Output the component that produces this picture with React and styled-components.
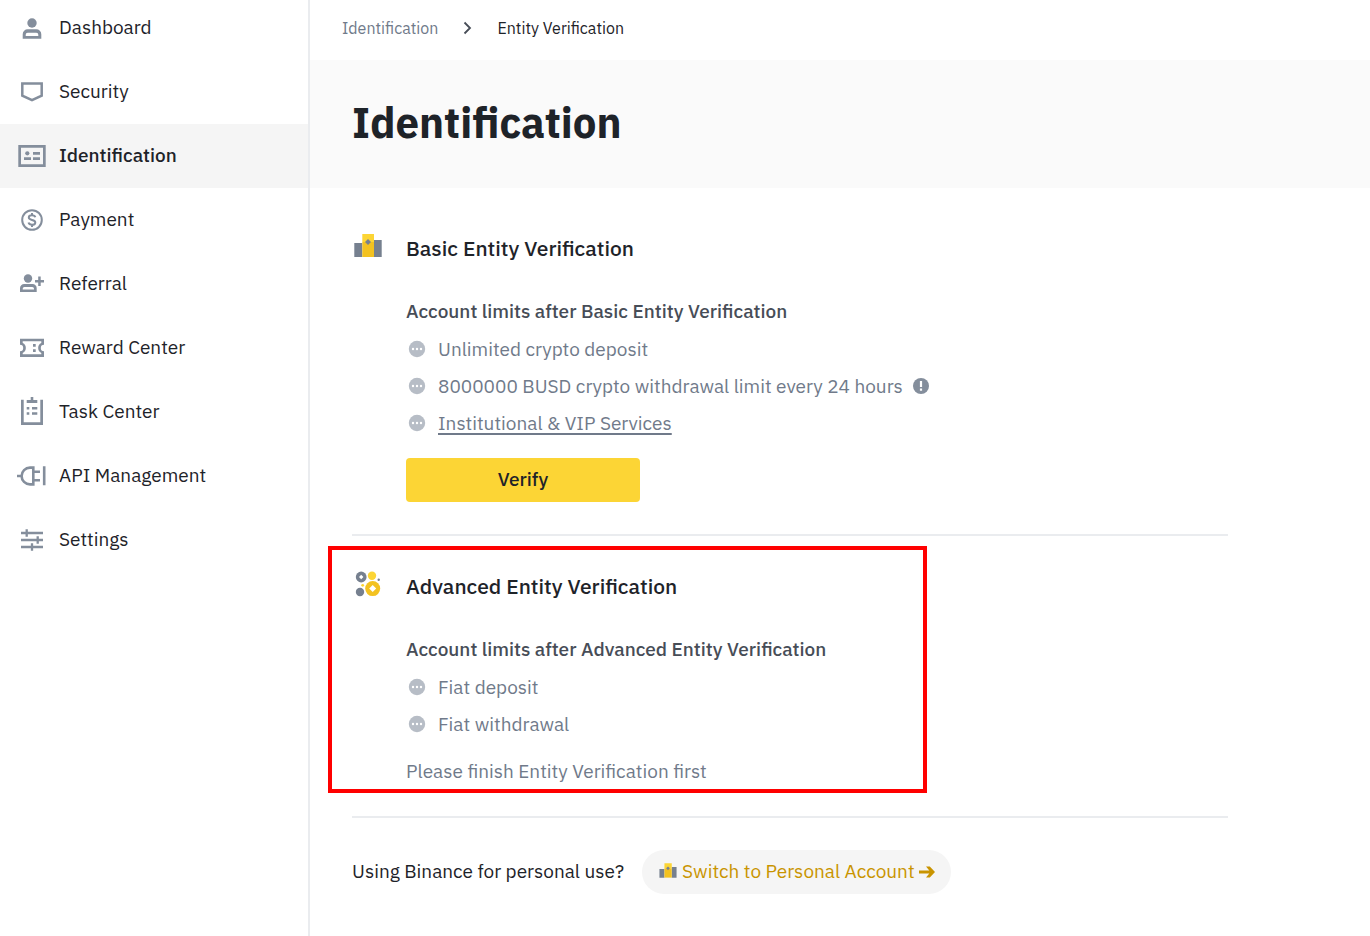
import React from "react";
import styled, { createGlobalStyle } from "styled-components";

const GlobalStyle = createGlobalStyle`
  *, *::before, *::after { box-sizing: border-box; }
  body {
    margin: 0;
    background: #fff;
    color: #1e2329;
    font-family: "IBM Plex Sans", Roboto, "Liberation Sans", sans-serif;
    font-size: 19px;
    line-height: 24px;
  }
  h1, h2, h3, p, ul, ol { margin: 0; padding: 0; }
  ul, ol { list-style: none; }
  a { color: inherit; text-decoration: none; }
`;

const Page = styled.div`
  display: flex;
  min-height: 100vh;
  overflow: hidden;
`;

const Sidebar = styled.nav`
  flex: 0 0 310px;
  border-right: 2px solid #eaecef;
`;

const NavList = styled.ul`
  margin-top: -4px;
`;

const NavLink = styled.a`
  display: flex;
  align-items: center;
  gap: 11px;
  height: 64px;
  padding: 0 16px;
  background: ${(p) => (p.$active ? "#f5f5f5" : "transparent")};
  font-weight: ${(p) => (p.$active ? 500 : 400)};
`;

const Label = styled.span`
  padding-bottom: 2px;
`;

const Icon = styled.svg`
  flex: none;
  display: block;
  width: ${(p) => p.$size || 32}px;
  height: ${(p) => p.$size || 32}px;
  color: #848e9c;
`;

const Main = styled.main`
  flex: 1;
  min-width: 0;
`;

const Crumbs = styled.ol`
  display: flex;
  align-items: center;
  height: 60px;
  padding: 0 32px 4px;
  font-size: 16px;
  color: #707a8a;
`;

const Crumb = styled.li`
  display: flex;
  align-items: center;
  color: ${(p) => (p.$current ? "#1e2329" : "inherit")};
`;

const Chevron = styled.svg`
  width: 11px;
  height: 14px;
  margin: 0 24px;
`;

const Banner = styled.header`
  display: flex;
  align-items: center;
  height: 128px;
  padding: 0 42px 2px;
  background: #fafafa;
`;

const PageTitle = styled.h1`
  font-size: 42px;
  line-height: 56px;
  font-weight: 700;
`;

const Content = styled.div`
  max-width: 960px;
  padding: 10px 42px 42px;
`;

const Section = styled.section`
  position: relative;
  padding: 34px 0 32px;
  border-bottom: 2px solid #eaecef;
`;

const SectionHead = styled.div`
  display: flex;
  align-items: center;
  gap: 22px;
  margin-bottom: 29px;
`;

const SectionTitle = styled.h2`
  font-size: 21px;
  line-height: 32px;
  font-weight: 500;
`;

const SectionBody = styled.div`
  padding-left: 54px;
  color: #707a8a;
`;

const LimitsTitle = styled.h3`
  font-size: 19px;
  line-height: 37px;
  font-weight: 500;
  color: #474d57;
`;

const Limit = styled.li`
  display: flex;
  align-items: center;
  gap: 10px;
  height: 37px;
`;

const TextLink = styled.a`
  text-decoration: underline;
  text-decoration-thickness: 2px;
  text-underline-offset: 3px;
`;

const Note = styled.p`
  padding: 17px 0 1px;
`;

const VerifyButton = styled.button`
  display: block;
  width: 234px;
  height: 44px;
  margin-top: 17px;
  padding: 0 0 2px;
  border: 0;
  border-radius: 4px;
  background: #fcd535;
  color: #1e2329;
  font: inherit;
  font-weight: 500;
`;

const Highlight = styled.div`
  position: absolute;
  top: 10px;
  bottom: 23px;
  left: -24px;
  width: 599px;
  border: 4px solid #ff0000;
  pointer-events: none;
`;

const Switcher = styled.div`
  display: flex;
  align-items: center;
  gap: 18px;
  padding-top: 32px;
`;

const SwitchLink = styled.a`
  display: flex;
  align-items: center;
  gap: 4px;
  height: 44px;
  padding: 0 16px;
  border-radius: 22px;
  background: #f5f5f5;
  color: #c99400;
`;

const drawings = {
  user: (
    <g fill="currentColor">
      <circle cx="16" cy="11" r="4.7" />
      <path fillRule="evenodd" d="M6.7 26.7V22.3a5 5 0 0 1 5-5h8.6a5 5 0 0 1 5 5v4.4zM9.7 24h12.6v-1.3a2 2 0 0 0-2-2h-8.6a2 2 0 0 0-2 2z" />
    </g>
  ),
  shield: <path d="M6.3 7.6h19.4v12L16 24.2l-9.7-4.6z" fill="none" stroke="currentColor" strokeWidth="2.5" />,
  card: (
    <g fill="currentColor">
      <path fillRule="evenodd" d="M2.3 5h27.4v22H2.3zM5 7.7v16.6h22V7.7z" />
      <circle cx="11.3" cy="13.3" r="2.1" />
      <path d="M8 17.3h7V20H8zM17 12h7v2.7h-7zM17 17.3h7V20h-7z" />
    </g>
  ),
  dollar: (
    <g fill="none" stroke="currentColor" strokeWidth="2">
      <circle cx="16" cy="16" r="9.8" />
      <path d="M19.3 13.2c-.4-1.3-1.7-1.900-3.300-1.900-1.900 0-3.200.9-3.200 2.300 0 3.300 6.500 1.500 6.500 4.800 0 1.500-1.400 2.400-3.300 2.400-1.800 0-3.100-.8-3.500-2.200M16 9v2.500M16 20.500V23" />
    </g>
  ),
  referral: (
    <g fill="currentColor">
      <circle cx="12" cy="10.5" r="4.2" />
      <path fillRule="evenodd" d="M4 24v-3.800a4.200 4.200 0 0 1 4.200-4.200h8.300a4.200 4.200 0 0 1 4.200 4.200V24zM6.700 21.500H18v-.8a1.800 1.800 0 0 0-1.800-1.800H8.500a1.800 1.800 0 0 0-1.800 1.800z" />
      <path d="M22.200 8.500h2.500V12H28v2.500h-3.300V18h-2.500v-3.500H19V12h3.200z" />
    </g>
  ),
  ticket: (
    <g fill="currentColor">
      <path fillRule="evenodd" d="M4 6.700h24v6.100a3.200 3.200 0 0 0 0 6.400V25H4v-5.800a3.200 3.200 0 0 0 0-6.400zM6.700 9.300v1.800a5.400 5.400 0 0 1 0 9.800v1.400h18.600v-1.400a5.400 5.400 0 0 1 0-9.800V9.300z" />
      <path d="M17 12h2.700v2.700H17zM17 17.300h2.700V20H17z" />
    </g>
  ),
  clipboard: (
    <g fill="currentColor">
      <path d="M5 3.700h2.700v22.600h16.600V3.700H27V29H5z" />
      <path d="M10.700 4h4V1h2.600v3h4v3H10.700zM10.700 11h2.600v2.500h-2.600zM16 11h5.300v2.500H16zM10.700 16.300h2.600v2.500h-2.600zM16 16.300h5.300v2.500H16z" />
    </g>
  ),
  plug: (
    <g fill="none" stroke="currentColor" strokeWidth="2.6">
      <path d="M1 16h4M17.300 7.600H14a8.400 8.400 0 0 0 0 16.800h3.300zM18 11.700h6M18 20.300h6M28.200 6.300v19" />
    </g>
  ),
  sliders: (
    <g fill="none" stroke="currentColor" strokeWidth="2.3">
      <path d="M5 9h22M5 16h22M5 23h22M10.700 5.300v7.400M21.700 12.300v7.400M16 19.300v7.400" />
    </g>
  ),
  building: (
    <g>
      <path d="M2.300 11h8v14h-8zM22 8h7.700v17H22z" fill="#76808f" />
      <path d="M10.300 2H22v8H10.300z" fill="#fcd535" />
      <path d="M10.300 10H22v15H10.300z" fill="#f3c220" />
      <path d="M16 7l3 3-3 3-3-3z" fill="#76808f" />
    </g>
  ),
  coins: (
    <g>
      <g fill="#76808f">
        <circle cx="9.2" cy="7" r="5.4" />
        <circle cx="8" cy="22" r="4.2" />
        <circle cx="26.7" cy="9.7" r="1.2" />
      </g>
      <path d="M9.200 4.800L11.400 7 9.200 9.200 7 7z" fill="#fff" />
      <circle cx="20" cy="5.8" r="4.2" fill="#fcd535" />
      <circle cx="10.7" cy="15.3" r="1.4" fill="#fcd535" />
      <circle cx="20.7" cy="18.6" r="7.5" fill="#f3c220" />
      <path d="M20.700 15.100l3.500 3.500-3.500 3.500-3.500-3.500z" fill="#fff" />
    </g>
  ),
};

const Glyph = ({ name, size }) => (
  <Icon $size={size} viewBox="0 0 32 32" aria-hidden="true">
    {drawings[name]}
  </Icon>
);

const PendingDot = () => (
  <Icon $size={22} viewBox="0 0 22 22" aria-hidden="true">
    <circle cx="11" cy="11" r="8.2" fill="#b7bdc6" />
    <g fill="#fff">
      <circle cx="7" cy="11" r="1.2" />
      <circle cx="11" cy="11" r="1.2" />
      <circle cx="15" cy="11" r="1.2" />
    </g>
  </Icon>
);

const InfoDot = () => (
  <Icon $size={16} viewBox="0 0 16 16" role="img" aria-label="More information">
    <circle cx="8" cy="8" r="8" fill="#848e9c" />
    <path d="M6.900 3h2.200v6H6.900zM6.900 10.500h2.200v2.200H6.900z" fill="#fff" />
  </Icon>
);

const Arrow = () => (
  <Icon $size={16} viewBox="0 0 16 16" aria-hidden="true">
    <path d="M0 6.600h10.300L7 2.400h3.800L16 8l-5.200 5.600H7l3.300-4.200H0z" fill="#c99400" />
  </Icon>
);

const navItems = [
  ["user", "Dashboard"],
  ["shield", "Security"],
  ["card", "Identification"],
  ["dollar", "Payment"],
  ["referral", "Referral"],
  ["ticket", "Reward Center"],
  ["clipboard", "Task Center"],
  ["plug", "API Management"],
  ["sliders", "Settings"],
];

export default function App() {
  return (
    <>
      <GlobalStyle />
      <Page>
        <Sidebar aria-label="Account">
          <NavList>
            {navItems.map(([icon, label]) => (
              <li key={label}>
                <NavLink href="#" $active={label === "Identification"}>
                  <Glyph name={icon} />
                  <Label>{label}</Label>
                </NavLink>
              </li>
            ))}
          </NavList>
        </Sidebar>
        <Main>
          <nav aria-label="Breadcrumb">
            <Crumbs>
              <Crumb>
                <a href="#">Identification</a>
                <Chevron viewBox="0 0 11 14" aria-hidden="true">
                  <path d="M2.500 1.500L8 7l-5.500 5.500" fill="none" stroke="#474d57" strokeWidth="1.8" />
                </Chevron>
              </Crumb>
              <Crumb $current aria-current="page">Entity Verification</Crumb>
            </Crumbs>
          </nav>
          <Banner>
            <PageTitle>Identification</PageTitle>
          </Banner>
          <Content>
            <Section>
              <SectionHead>
                <Glyph name="building" />
                <SectionTitle>Basic Entity Verification</SectionTitle>
              </SectionHead>
              <SectionBody>
                <LimitsTitle>Account limits after Basic Entity Verification</LimitsTitle>
                <ul>
                  <Limit><PendingDot />Unlimited crypto deposit</Limit>
                  <Limit><PendingDot />8000000 BUSD crypto withdrawal limit every 24 hours<InfoDot /></Limit>
                  <Limit><PendingDot /><TextLink href="#">Institutional &amp; VIP Services</TextLink></Limit>
                </ul>
                <VerifyButton type="button">Verify</VerifyButton>
              </SectionBody>
            </Section>
            <Section>
              <SectionHead>
                <Glyph name="coins" />
                <SectionTitle>Advanced Entity Verification</SectionTitle>
              </SectionHead>
              <SectionBody>
                <LimitsTitle>Account limits after Advanced Entity Verification</LimitsTitle>
                <ul>
                  <Limit><PendingDot />Fiat deposit</Limit>
                  <Limit><PendingDot />Fiat withdrawal</Limit>
                </ul>
                <Note>Please finish Entity Verification first</Note>
              </SectionBody>
              <Highlight />
            </Section>
            <Switcher>
              <Label>Using Binance for personal use?</Label>
              <SwitchLink href="#">
                <Glyph name="building" size={20} />
                <Label>Switch to Personal Account</Label>
                <Arrow />
              </SwitchLink>
            </Switcher>
          </Content>
        </Main>
      </Page>
    </>
  );
}
